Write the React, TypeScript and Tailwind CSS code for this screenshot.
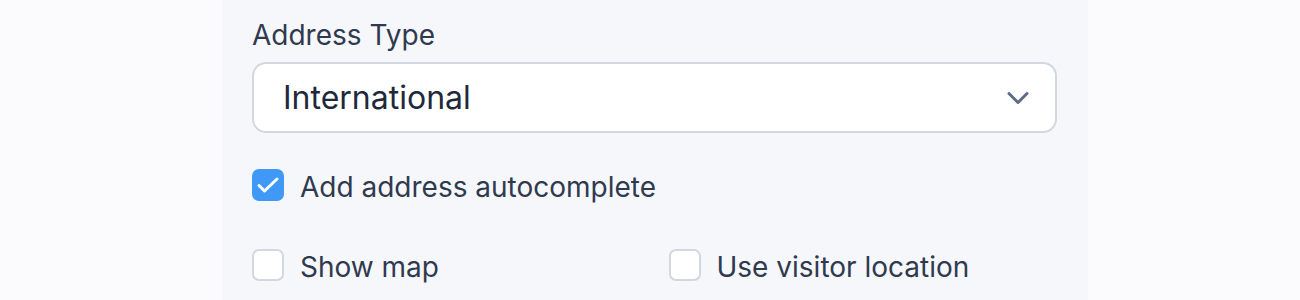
import { useState } from 'react'

function Checkbox({
  label,
  checked,
  onChange,
}: {
  label: string
  checked: boolean
  onChange: () => void
}) {
  return (
    <label className="flex cursor-pointer items-start gap-4">
      <span
        onClick={onChange}
        className={
          checked
            ? 'flex h-8 w-8 shrink-0 items-center justify-center rounded-[7px] bg-[#4098f7]'
            : 'flex h-8 w-8 shrink-0 items-center justify-center rounded-[7px] border-2 border-[#d3d7df] bg-white'
        }
      >
        {checked && (
          <svg width="32" height="32" viewBox="0 0 32 32" fill="none">
            <path
              d="M7 16.5l5.5 5.5L25 10"
              stroke="white"
              strokeWidth="3"
              strokeLinecap="round"
              strokeLinejoin="round"
            />
          </svg>
        )}
      </span>
      <span className="pt-[2px] text-[28px] leading-8 text-[#2f3a4f]">{label}</span>
    </label>
  )
}

export default function App() {
  const [auto, setAuto] = useState(true)
  const [map, setMap] = useState(false)
  const [visitor, setVisitor] = useState(false)

  return (
    <div
      className="flex h-[300px] w-full bg-[#fbfbfd]"
      style={{ fontFamily: 'Inter, "Noto Sans", sans-serif' }}
    >
      <div className="ml-[222px] w-[866px] bg-[#f6f7fb] pl-[30px] pr-[31px] pt-[17px]">
        <div className="text-[28px] leading-9 text-[#2f3a4f]">Address Type</div>
        <div className="mt-[9px] flex h-[71px] items-center justify-between rounded-[14px] border-2 border-[#d3d7df] bg-white pl-[29px] pr-[26px]">
          <span className="text-[32px] text-[#1e293b]">International</span>
          <svg width="22" height="14" viewBox="0 0 22 14" fill="none">
            <path
              d="M2 2.5l9 9 9-9"
              stroke="#5f6b85"
              strokeWidth="3"
              strokeLinecap="round"
              strokeLinejoin="round"
            />
          </svg>
        </div>
        <div className="mt-[36px]">
          <Checkbox label="Add address autocomplete" checked={auto} onChange={() => setAuto(!auto)} />
        </div>
        <div className="mt-[46px] grid grid-cols-2 gap-x-7">
          <Checkbox label="Show map" checked={map} onChange={() => setMap(!map)} />
          <Checkbox label="Use visitor location" checked={visitor} onChange={() => setVisitor(!visitor)} />
        </div>
      </div>
    </div>
  )
}
